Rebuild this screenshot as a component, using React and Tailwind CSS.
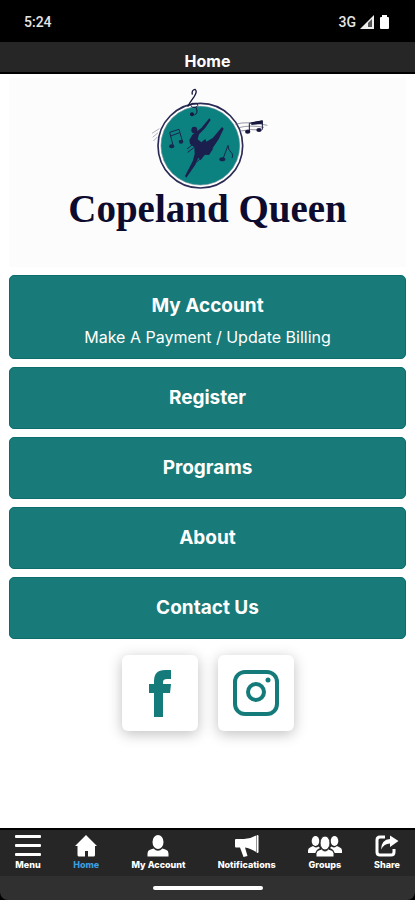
import React from 'react';

const LINKS = [
    { title: 'My Account', subtitle: 'Make A Payment / Update Billing' },
    { title: 'Register' },
    { title: 'Programs' },
    { title: 'About' },
    { title: 'Contact Us' },
];

const MenuIcon = () => (
    <svg viewBox="0 0 26 22" className="h-[22px] w-[26px]" fill="currentColor">
        <rect x="0" y="0" width="26" height="3" rx="1" />
        <rect x="0" y="9" width="26" height="3" rx="1" />
        <rect x="0" y="18" width="26" height="3" rx="1" />
    </svg>
);

const HomeIcon = () => (
    <svg viewBox="0 0 24 22" className="h-[22px] w-6" fill="currentColor">
        <path d="M12 0 L23 11 H21 V20 Q21 21.500 19.500 21.500 H14 V16 H11 V21.500 H5 Q3.500 21.500 3.500 20 V11 H1 Z" />
    </svg>
);

const UserIcon = () => (
    <svg viewBox="0 0 24 22" className="h-[22px] w-6" fill="currentColor">
        <ellipse cx="12" cy="7" rx="5.500" ry="7" />
        <path d="M1.500 21.500 V18.500 Q1.500 15.500 4 14.800 L7.500 13.500 Q12 18 16.500 13.500 L20 14.800 Q22.500 15.500 22.500 18.500 V21.500 Z" />
    </svg>
);

const MegaphoneIcon = () => (
    <svg viewBox="0 0 24 22" className="h-[22px] w-6" fill="currentColor">
        <path d="M0 5 Q0 4 1 4 H9 Q15 4 21 0.500 V17 Q15 13 10 12.500 L12.500 21 L8.500 22 L5 12.500 H1 Q0 12.500 0 11.500 Z" />
        <rect x="21.500" y="0" width="2" height="18" rx="1" />
    </svg>
);

const GroupIcon = () => (
    <svg viewBox="0 0 34 22" className="h-[22px] w-[34px]" fill="currentColor">
        <ellipse cx="7.500" cy="6" rx="3.800" ry="5" />
        <ellipse cx="26.500" cy="6" rx="3.800" ry="5" />
        <path d="M0 18 V15.500 Q0 13 2.500 12.200 L5 11 Q7.500 13.500 10.500 11.500 L12 13 Q8 14.500 7.500 18 Z" />
        <path d="M34 18 V15.500 Q34 13 31.500 12.200 L29 11 Q26.500 13.500 23.500 11.500 L22 13 Q26 14.500 26.500 18 Z" />
        <g stroke="#262626" strokeWidth="1">
            <ellipse cx="17" cy="8" rx="5" ry="7" />
            <path d="M8 22 V18.500 Q8 16 10.500 15.200 L13.500 14 Q17 18 20.500 14 L23.500 15.200 Q26 16 26 18.500 V22 Z" />
        </g>
    </svg>
);

const ShareIcon = () => (
    <svg viewBox="0 0 24 22" className="h-[22px] w-6">
        <path d="M10 2 H5 Q2 2 2 5 V17 Q2 20 5 20 H16 Q19 20 19 17 V14" fill="none" stroke="currentColor" strokeWidth="3" />
        <path d="M15 0.500 L23.500 6 L15 12 V8.500 Q9 8.500 6 14.500 Q6.500 4.500 15 4 Z" fill="currentColor" />
    </svg>
);

const TABS = [
    { label: 'Menu', Icon: MenuIcon },
    { label: 'Home', Icon: HomeIcon, active: true },
    { label: 'My Account', Icon: UserIcon },
    { label: 'Notifications', Icon: MegaphoneIcon },
    { label: 'Groups', Icon: GroupIcon },
    { label: 'Share', Icon: ShareIcon },
];

const Emblem = () => (
    <svg viewBox="-15 0 435 345" className="h-[115px] w-[145px]" fill="none" aria-hidden="true">
        <circle cx="181" cy="197" r="127" fill="#fff" stroke="#2b2b55" strokeWidth="5" />
        <circle cx="181" cy="197" r="118" fill="#0b8280" stroke="#5c8a96" strokeWidth="2" />

        {/* treble clef */}
        <path d="M143 80 L151 66 L163 49 Q173 34 165 28 Q154 30 157 44" stroke="#17173f" strokeWidth="4" />
        <path d="M149 76 Q154 67 170 70 Q178 76 168 82 Q154 84 153 76 M168 82 Q176 100 163 105" stroke="#17173f" strokeWidth="3" />
        <circle cx="156" cy="103" r="6" fill="#17173f" />

        {/* staff lines */}
        <path d="M286 133 Q320 122 382 136 M296 143 Q330 134 372 142 M302 153 Q330 146 366 150" stroke="#62627a" strokeWidth="2" />
        <path d="M36 160 L58 146 M38 172 L54 158 M40 183 L52 171" stroke="#8b8ba0" strokeWidth="2" />
        <path d="M328 154 V130 L367 123 V149" stroke="#17173f" strokeWidth="3" />
        <path d="M334 127 L368 121 V131 L334 135 Z" fill="#17173f" />
        <ellipse cx="323" cy="155" rx="8" ry="6" fill="#17173f" />
        <ellipse cx="357" cy="150" rx="8" ry="6" fill="#17173f" />

        {/* notes inside the disc */}
        <g stroke="#18264f" strokeWidth="3">
            <path d="M99 196 L89 157 L117 148 L127 183 M92 168 L119 158" />
            <path d="M250 234 L264 196 Q264 211 276 220 Q280 228 276 234" />
        </g>
        <g fill="#18264f">
            <ellipse cx="95" cy="199" rx="8" ry="6" />
            <ellipse cx="123" cy="185" rx="7" ry="6" />
            <ellipse cx="247" cy="238" rx="9" ry="6" />
        </g>

        {/* dancer */}
        <g fill="#1b1f4d">
            <ellipse cx="163" cy="150" rx="9" ry="10" />
            <path d="M208 115 L212 120 L195 145 L177 163 L173 178 L184 187 L196 177 L199 185 L218 174 L246 141 L251 146 L236 178 L216 207 L221 204 L207 225 L194 224 L182 241 L175 233 L166 254 L139 293 L135 288 L158 244 L164 222 L163 202 L150 192 L148 180 L157 164 L184 144 Z" />
        </g>
        <path d="M141 207 L163 190 M143 217 L163 202 M170 246 L202 216 M180 225 L226 190 M185 205 L231 176" stroke="#1b1f4d" strokeWidth="3" />
    </svg>
);

const FacebookIcon = () => (
    <svg viewBox="0 0 24 48" className="h-12 w-6" fill="#147b7a">
        <path d="M6 48 V24 H1 V15 H6 V12 Q6 1 17 1 H23 V10 H19 Q15 10 15 13 V15 H23 L22 24 H15 V48 Z" />
    </svg>
);

const InstagramIcon = () => (
    <svg viewBox="0 0 46 46" className="h-[46px] w-[46px]" fill="none" stroke="#147b7a">
        <rect x="2" y="2" width="42" height="42" rx="10" strokeWidth="4" />
        <circle cx="23" cy="22" r="8" strokeWidth="4" />
        <circle cx="35" cy="10" r="2.500" fill="#147b7a" stroke="none" />
    </svg>
);

const SOCIALS = [
    { name: 'Facebook', Icon: FacebookIcon },
    { name: 'Instagram', Icon: InstagramIcon },
];

const App = () => {
    return (
        <div className="flex min-h-screen flex-col bg-white font-['Inter',sans-serif]">

            {/* STATUS BAR */}
            <div className="flex h-[42px] items-center justify-between bg-black px-6 pt-0.5 font-['Roboto',sans-serif] text-sm font-medium text-neutral-200">
                <span>5:24</span>
                <div className="flex items-center gap-1">
                    <span>3G</span>
                    <svg viewBox="0 0 14 14" className="h-3.5 w-3.5">
                        <path d="M0 14 L14 0 V14 Z" fill="#eee" />
                        <path d="M8 8 L12 4 V12 H8 Z" fill="#555" />
                    </svg>
                    <svg viewBox="0 0 13 14" className="h-3.5 w-[13px]" fill="#fff">
                        <path d="M4 2 V0 H9 V2 H10 Q11 2 11 3 V13 Q11 14 10 14 H3 Q2 14 2 13 V3 Q2 2 3 2 Z" />
                    </svg>
                </div>
            </div>

            {/* HEADER */}
            <header className="flex h-8 items-center justify-center border-b-2 border-black bg-[#262626] pt-2">
                <h1 className="text-base font-bold text-white">Home</h1>
            </header>

            <main className="flex flex-1 flex-col px-2 pt-1">

                {/* LOGO */}
                <div className="mx-px flex h-[189px] flex-col items-center bg-[#fcfcfc] pt-0.5">
                    <Emblem />
                    <p className="-mt-2 font-['Liberation_Serif',serif] text-[39px] font-bold leading-[44px] text-[#0d0b2e]">
                        Copeland Queen
                    </p>
                </div>

                {/* LINKS */}
                <nav className="mx-px mt-2 flex flex-col gap-2">
                    {LINKS.map((link) => (
                        <a
                            key={link.title}
                            href="#"
                            className="flex flex-col items-center rounded-[5px] border border-[#0c6d6b] bg-[#187a79] py-[18px] text-white"
                        >
                            <span className="text-[19px] font-bold leading-6">{link.title}</span>
                            {link.subtitle && (
                                <span className="mt-2 -mb-2 text-base leading-[22px]">{link.subtitle}</span>
                            )}
                        </a>
                    ))}
                </nav>

                {/* SOCIALS */}
                <div className="mt-4 flex justify-center gap-5">
                    {SOCIALS.map(({ name, Icon }) => (
                        <a
                            key={name}
                            href="#"
                            aria-label={name}
                            className="flex h-[76px] w-[76px] items-center justify-center rounded-md bg-white shadow-[0_3px_14px_rgba(0,0,0,0.25)]"
                        >
                            <Icon />
                        </a>
                    ))}
                </div>
            </main>

            {/* TAB BAR */}
            <footer className="bg-black">
                <nav className="flex h-12 justify-between border-t-2 border-black bg-[#262626] px-[15px] pt-[5px]">
                    {TABS.map(({ label, Icon, active }) => (
                        <button key={label} type="button" className="flex flex-col items-center text-white">
                            <Icon />
                            <span className={active ? 'mt-0.5 text-[9px] font-extrabold leading-3 text-[#3b9ddd]' : 'mt-0.5 text-[9px] font-extrabold leading-3'}>
                                {label}
                            </span>
                        </button>
                    ))}
                </nav>
                <div className="flex h-6 justify-center rounded-b-lg bg-[#303030] pt-2.5">
                    <div className="h-1 w-[110px] rounded-full bg-white" />
                </div>
            </footer>
        </div>
    );
};

export default App;
